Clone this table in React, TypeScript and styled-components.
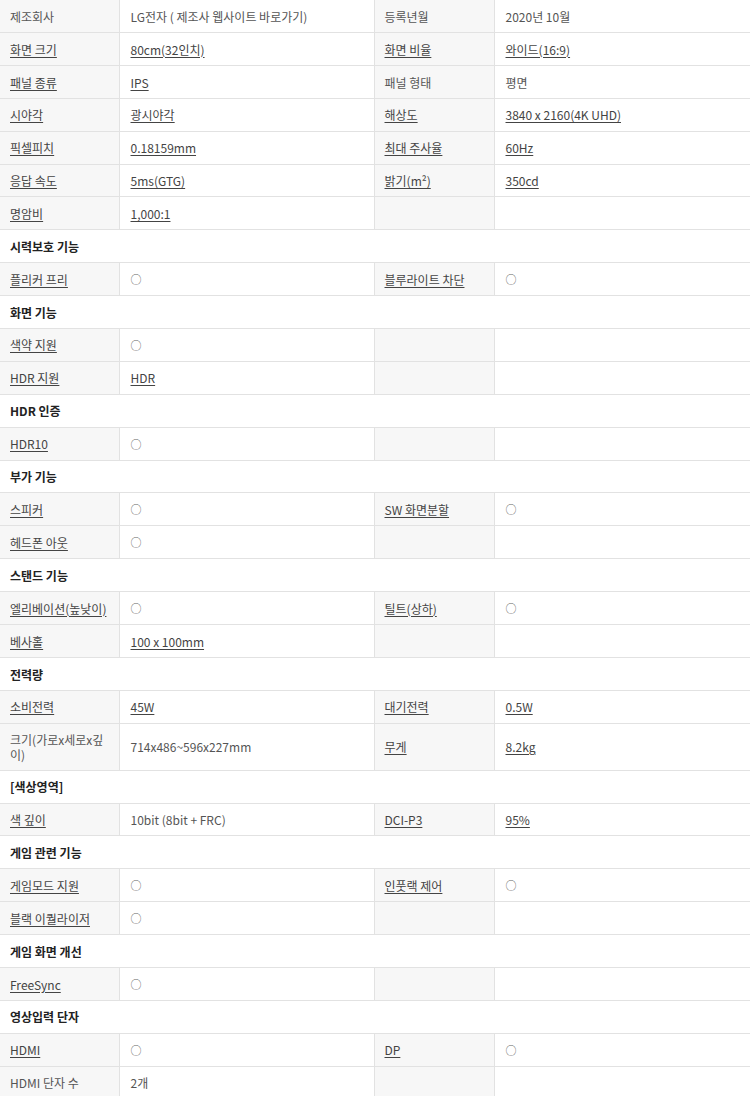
import React from "react";
import styled, {createGlobalStyle} from "styled-components";

const GlobalStyle = createGlobalStyle`
	html, body {
		margin: 0;
		padding: 0;
		background: #fff;
	}
	body {
		font-family: "Noto Sans CJK KR", "Noto Sans", sans-serif;
		font-size: 12px;
		color: #555;
	}
`;

type Cell = {text: string; link?: boolean};
type Row =
	| {kind: "spec"; cells: (Cell | null)[]}
	| {kind: "head"; title: string};

const L = (text: string): Cell => ({text, link: true});
const P = (text: string): Cell => ({text});
const O: Cell = {text: "○"};

const spec = (...cells: (Cell | null)[]): Row => ({kind: "spec", cells});
const head = (title: string): Row => ({kind: "head", title});

const rows: Row[] = [
	spec(P("제조회사"), P("LG전자 ( 제조사 웹사이트 바로가기)"), P("등록년월"), P("2020년 10월")),
	spec(L("화면 크기"), L("80cm(32인치)"), L("화면 비율"), L("와이드(16:9)")),
	spec(L("패널 종류"), L("IPS"), P("패널 형태"), P("평면")),
	spec(L("시야각"), L("광시야각"), L("해상도"), L("3840 x 2160(4K UHD)")),
	spec(L("픽셀피치"), L("0.18159mm"), L("최대 주사율"), L("60Hz")),
	spec(L("응답 속도"), L("5ms(GTG)"), L("밝기(m²)"), L("350cd")),
	spec(L("명암비"), L("1,000:1"), null, null),
	head("시력보호 기능"),
	spec(L("플리커 프리"), O, L("블루라이트 차단"), O),
	head("화면 기능"),
	spec(L("색약 지원"), O, null, null),
	spec(L("HDR 지원"), L("HDR"), null, null),
	head("HDR 인증"),
	spec(L("HDR10"), O, null, null),
	head("부가 기능"),
	spec(L("스피커"), O, L("SW 화면분할"), O),
	spec(L("헤드폰 아웃"), O, null, null),
	head("스탠드 기능"),
	spec(L("엘리베이션(높낮이)"), O, L("틸트(상하)"), O),
	spec(L("베사홀"), L("100 x 100mm"), null, null),
	head("전력량"),
	spec(L("소비전력"), L("45W"), L("대기전력"), L("0.5W")),
	spec(P("크기(가로x세로x깊이)"), P("714x486~596x227mm"), L("무게"), L("8.2kg")),
	head("[색상영역]"),
	spec(L("색 깊이"), P("10bit (8bit + FRC)"), L("DCI-P3"), L("95%")),
	head("게임 관련 기능"),
	spec(L("게임모드 지원"), O, L("인풋랙 제어"), O),
	spec(L("블랙 이퀄라이저"), O, null, null),
	head("게임 화면 개선"),
	spec(L("FreeSync"), O, null, null),
	head("영상입력 단자"),
	spec(L("HDMI"), O, L("DP"), O),
	spec(P("HDMI 단자 수"), P("2개"), null, null)
];

const Table = styled.table`
	width: 750px;
	table-layout: fixed;
	border-collapse: collapse;
	border-spacing: 0;
`;

const Col = styled.col<{$w: number}>`
	width: ${p => p.$w}px;
`;

const Td = styled.td<{$label?: boolean; $first?: boolean}>`
	height: 32.84px;
	box-sizing: border-box;
	padding: 8px 10px 8px ${p => (p.$label ? 10 : 11)}px;
	line-height: 15px;
	vertical-align: middle;
	text-align: left;
	background: ${p => (p.$label ? "#f7f7f7" : "#fff")};
	border-bottom: 1px solid #e2e2e2;
	border-left: ${p => (p.$first ? "0" : "1px solid #e2e2e2")};
	color: #555;
	word-break: break-all;
`;

const HeadCell = styled.td`
	height: 32.84px;
	box-sizing: border-box;
	padding: 8px 10px;
	line-height: 15px;
	font-weight: 700;
	color: #222;
	background: #fff;
	border-bottom: 1px solid #e2e2e2;
`;

const SpecLink = styled.a`
	color: #444;
	text-decoration: underline;
	text-underline-offset: 2px;
	cursor: pointer;
`;

const Mark = styled.span`
	color: #666;
	font-size: 11px;
`;

const CellText = ({cell}: {cell: Cell | null}) => {
	if (!cell) return null;
	if (cell.text === "○") return <Mark>○</Mark>;
	if (cell.link) return <SpecLink>{cell.text}</SpecLink>;
	return <>{cell.text}</>;
};

export default function App() {
	return (
		<>
			<GlobalStyle />
			<Table>
				<colgroup>
					<Col $w={119} />
					<Col $w={255} />
					<Col $w={120} />
					<Col $w={256} />
				</colgroup>
				<tbody>
					{rows.map((row, i) =>
						row.kind === "head" ? (
							<tr key={i}>
								<HeadCell colSpan={4}>{row.title}</HeadCell>
							</tr>
						) : (
							<tr key={i}>
								{row.cells.map((cell, j) => (
									<Td key={j} $label={j % 2 === 0} $first={j === 0}>
										<CellText cell={cell} />
									</Td>
								))}
							</tr>
						)
					)}
				</tbody>
			</Table>
		</>
	);
}
